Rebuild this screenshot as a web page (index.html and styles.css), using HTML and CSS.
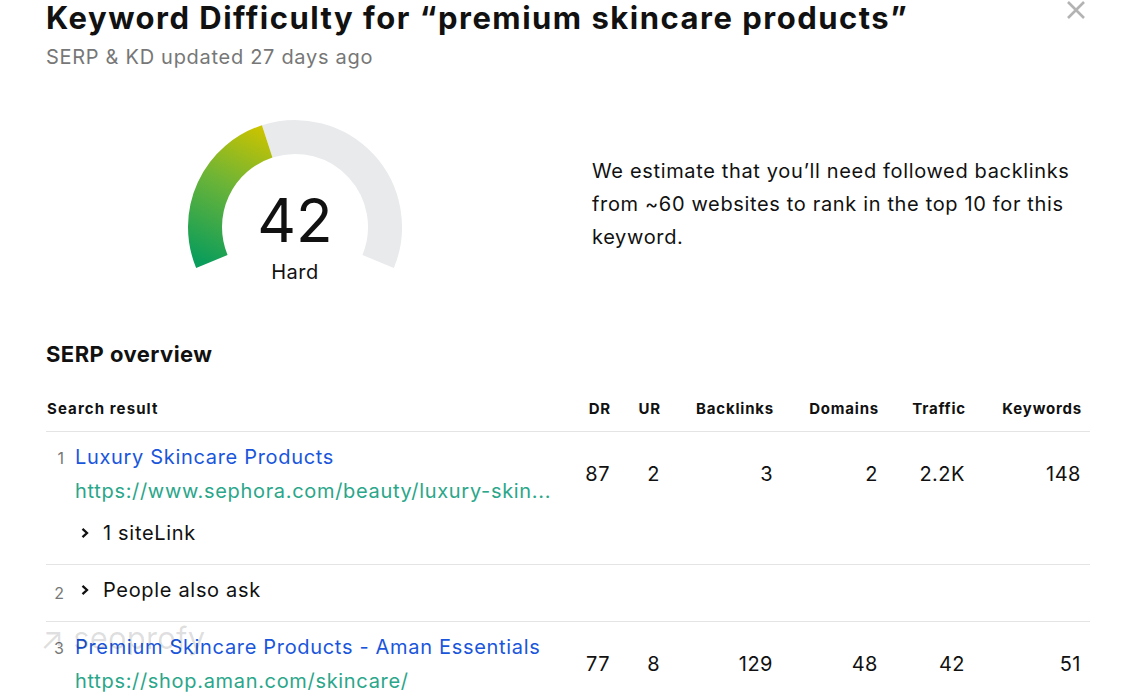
FILE: index.html
```html
<!DOCTYPE html>
<html lang="en">
  <head>
    <meta charset="UTF-8" />
    <meta name="viewport" content="width=device-width, initial-scale=1.0" />
    <title>Keyword Difficulty</title>
    <link rel="stylesheet" href="styles.css">
  </head>

  <body>
    <div class="modal">
      <button class="close" aria-label="Close">
        <svg width="20" height="20" viewBox="0 0 20 20">
          <path d="M2 2 L18 18 M18 2 L2 18" stroke="#b3b3b3" stroke-width="2.6" fill="none" />
        </svg>
      </button>

      <h1 class="title">Keyword Difficulty for “premium skincare products”</h1>
      <p class="updated">SERP &amp; KD updated 27 days ago</p>

      <section class="kd">
        <div class="gauge-wrap">
          <div class="gauge">
            <svg width="220" height="175" viewBox="0 0 220 175">
              <defs>
                <linearGradient id="kd-grad" gradientUnits="userSpaceOnUse" x1="30" y1="150" x2="95" y2="18">
                  <stop offset="0" stop-color="#0a9d5b" />
                  <stop offset="0.55" stop-color="#6cb437" />
                  <stop offset="1" stop-color="#cbc300" />
                </linearGradient>
              </defs>
              <path d="M 82.19 22.4 A 90 90 0 0 1 193.15 142.44" stroke="#e9eaec" stroke-width="34" fill="none" />
              <path d="M 26.85 142.44 A 90 90 0 0 1 82.19 22.4" stroke="url(#kd-grad)" stroke-width="34" fill="none" />
            </svg>
            <div class="gauge-label">
              <span class="score">42</span>
              <span class="level">Hard</span>
            </div>
          </div>
        </div>
        <p class="estimate">We estimate that you’ll need followed backlinks from ~60 websites to rank in the top 10 for this keyword.</p>
      </section>

      <h2 class="section-title">SERP overview</h2>

      <div class="serp">
        <div class="serp-line serp-head">
          <div class="cell-result">Search result</div>
          <div class="num">DR</div>
          <div class="num">UR</div>
          <div class="num">Backlinks</div>
          <div class="num">Domains</div>
          <div class="num">Traffic</div>
          <div class="num">Keywords</div>
        </div>

        <div class="serp-row">
          <div class="serp-line">
            <div class="cell-result">
              <span class="rank">1</span>
              <div class="result-body">
                <a class="result-title" href="#">Luxury Skincare Products</a>
                <div class="result-url">https://www.sephora.com/beauty/luxury-skin...</div>
              </div>
            </div>
            <div class="num">87</div>
            <div class="num">2</div>
            <div class="num">3</div>
            <div class="num">2</div>
            <div class="num">2.2K</div>
            <div class="num">148</div>
          </div>
          <div class="expander sitelinks">
            <svg class="chevron" width="10" height="12" viewBox="0 0 10 12">
              <path d="M2.5 1.8 L7 6 L2.5 10.2" stroke="#111" stroke-width="2.3" fill="none" />
            </svg>
            <span>1 siteLink</span>
          </div>
        </div>

        <div class="serp-row">
          <div class="serp-line">
            <div class="cell-result">
              <span class="rank rank-low">2</span>
              <div class="expander">
                <svg class="chevron" width="10" height="12" viewBox="0 0 10 12">
                  <path d="M2.5 1.8 L7 6 L2.5 10.2" stroke="#111" stroke-width="2.3" fill="none" />
                </svg>
                <span>People also ask</span>
              </div>
            </div>
          </div>
        </div>

        <div class="serp-row">
          <span class="watermark">↗ seoprofy</span>
          <div class="serp-line">
            <div class="cell-result">
              <span class="rank">3</span>
              <div class="result-body">
                <a class="result-title" href="#">Premium Skincare Products - Aman Essentials</a>
                <div class="result-url">https://shop.aman.com/skincare/</div>
              </div>
            </div>
            <div class="num">77</div>
            <div class="num">8</div>
            <div class="num">129</div>
            <div class="num">48</div>
            <div class="num">42</div>
            <div class="num">51</div>
          </div>
        </div>
      </div>
    </div>
  </body>
</html>
```

FILE: styles.css
```css
body {
  margin: 0;
  background: #fff;
  color: #111;
  font-family: Inter, "Noto Sans", sans-serif;
}

.modal {
  position: relative;
  padding: 0 43px 0 46px;
}

.close {
  position: absolute;
  top: 0;
  right: 47px;
  width: 20px;
  height: 20px;
  padding: 0;
  border: none;
  background: none;
  cursor: pointer;
}
.close svg {
  display: block;
}

.title {
  margin: 0;
  font-size: 31px;
  line-height: 36px;
  font-weight: 700;
  letter-spacing: 1.5px;
  white-space: nowrap;
}

.updated {
  margin: 7px 0 0;
  font-size: 20px;
  line-height: 28px;
  letter-spacing: 0.7px;
  color: #777;
}

/* gauge + estimate */
.kd {
  display: flex;
  align-items: center;
  margin-top: 48px;
}
.gauge-wrap {
  width: 498px;
  display: flex;
  justify-content: center;
  margin-right: 48px;
}
.gauge {
  display: grid;
}
.gauge > * {
  grid-area: 1 / 1;
}
.gauge svg {
  display: block;
}
.gauge-label {
  align-self: end;
  justify-self: center;
  display: flex;
  flex-direction: column;
  align-items: center;
  padding-bottom: 10px;
}
.score {
  font-size: 60px;
  line-height: 64px;
}
.level {
  margin-top: 8px;
  font-size: 20px;
  line-height: 24px;
  letter-spacing: 0.5px;
}

.estimate {
  margin: 0 0 4px;
  flex: 1;
  font-size: 20px;
  line-height: 33px;
  letter-spacing: 0.65px;
}

.section-title {
  margin: 46px 0 0;
  font-size: 22px;
  line-height: 28px;
  font-weight: 700;
  letter-spacing: 0.45px;
}

/* serp table */
.serp {
  margin-top: 31px;
}
.serp-line {
  display: grid;
  grid-template-columns: 1fr 49px 50px 113px 105px 87px 116px;
}
.num {
  text-align: right;
  padding-right: 9px;
  align-self: center;
  font-size: 20px;
  line-height: 34px;
  letter-spacing: 0.5px;
}
.serp-head {
  padding-bottom: 12px;
  border-bottom: 1px solid #e4e4e4;
}
.serp-head > div {
  font-size: 15px;
  line-height: 20px;
  font-weight: 700;
  letter-spacing: 0.8px;
  padding-left: 1px;
}
.serp-head .cell-result {
  letter-spacing: 1.1px;
}
.serp-head .num {
  padding-left: 0;
  padding-right: 8px;
}

.serp-row {
  position: relative;
  padding: 8px 0 14px;
  border-bottom: 1px solid #e4e4e4;
}
.cell-result {
  display: flex;
  align-items: baseline;
  min-width: 0;
}
.rank {
  width: 18px;
  margin-right: 11px;
  text-align: right;
  font-size: 16px;
  color: #777;
  flex-shrink: 0;
}
.rank-low {
  position: relative;
  top: 3px;
}
.result-body {
  min-width: 0;
  font-size: 20px;
  line-height: 34px;
  letter-spacing: 0.68px;
}
.result-title {
  display: block;
  color: #1a56db;
  text-decoration: none;
}
.result-url {
  color: #2aa68a;
  white-space: nowrap;
  overflow: hidden;
  text-overflow: ellipsis;
}

.expander {
  display: flex;
  align-items: center;
  gap: 13px;
  font-size: 20px;
  line-height: 34px;
  letter-spacing: 0.68px;
  padding-left: 5px;
}
.sitelinks {
  margin-top: 8px;
  padding-left: 34px;
}
.chevron {
  display: block;
  flex-shrink: 0;
}

.watermark {
  position: absolute;
  left: -6px;
  top: -1px;
  font-size: 31px;
  line-height: 34px;
  letter-spacing: 0.2px;
  color: rgba(0, 0, 0, 0.13);
  pointer-events: none;
}
```
